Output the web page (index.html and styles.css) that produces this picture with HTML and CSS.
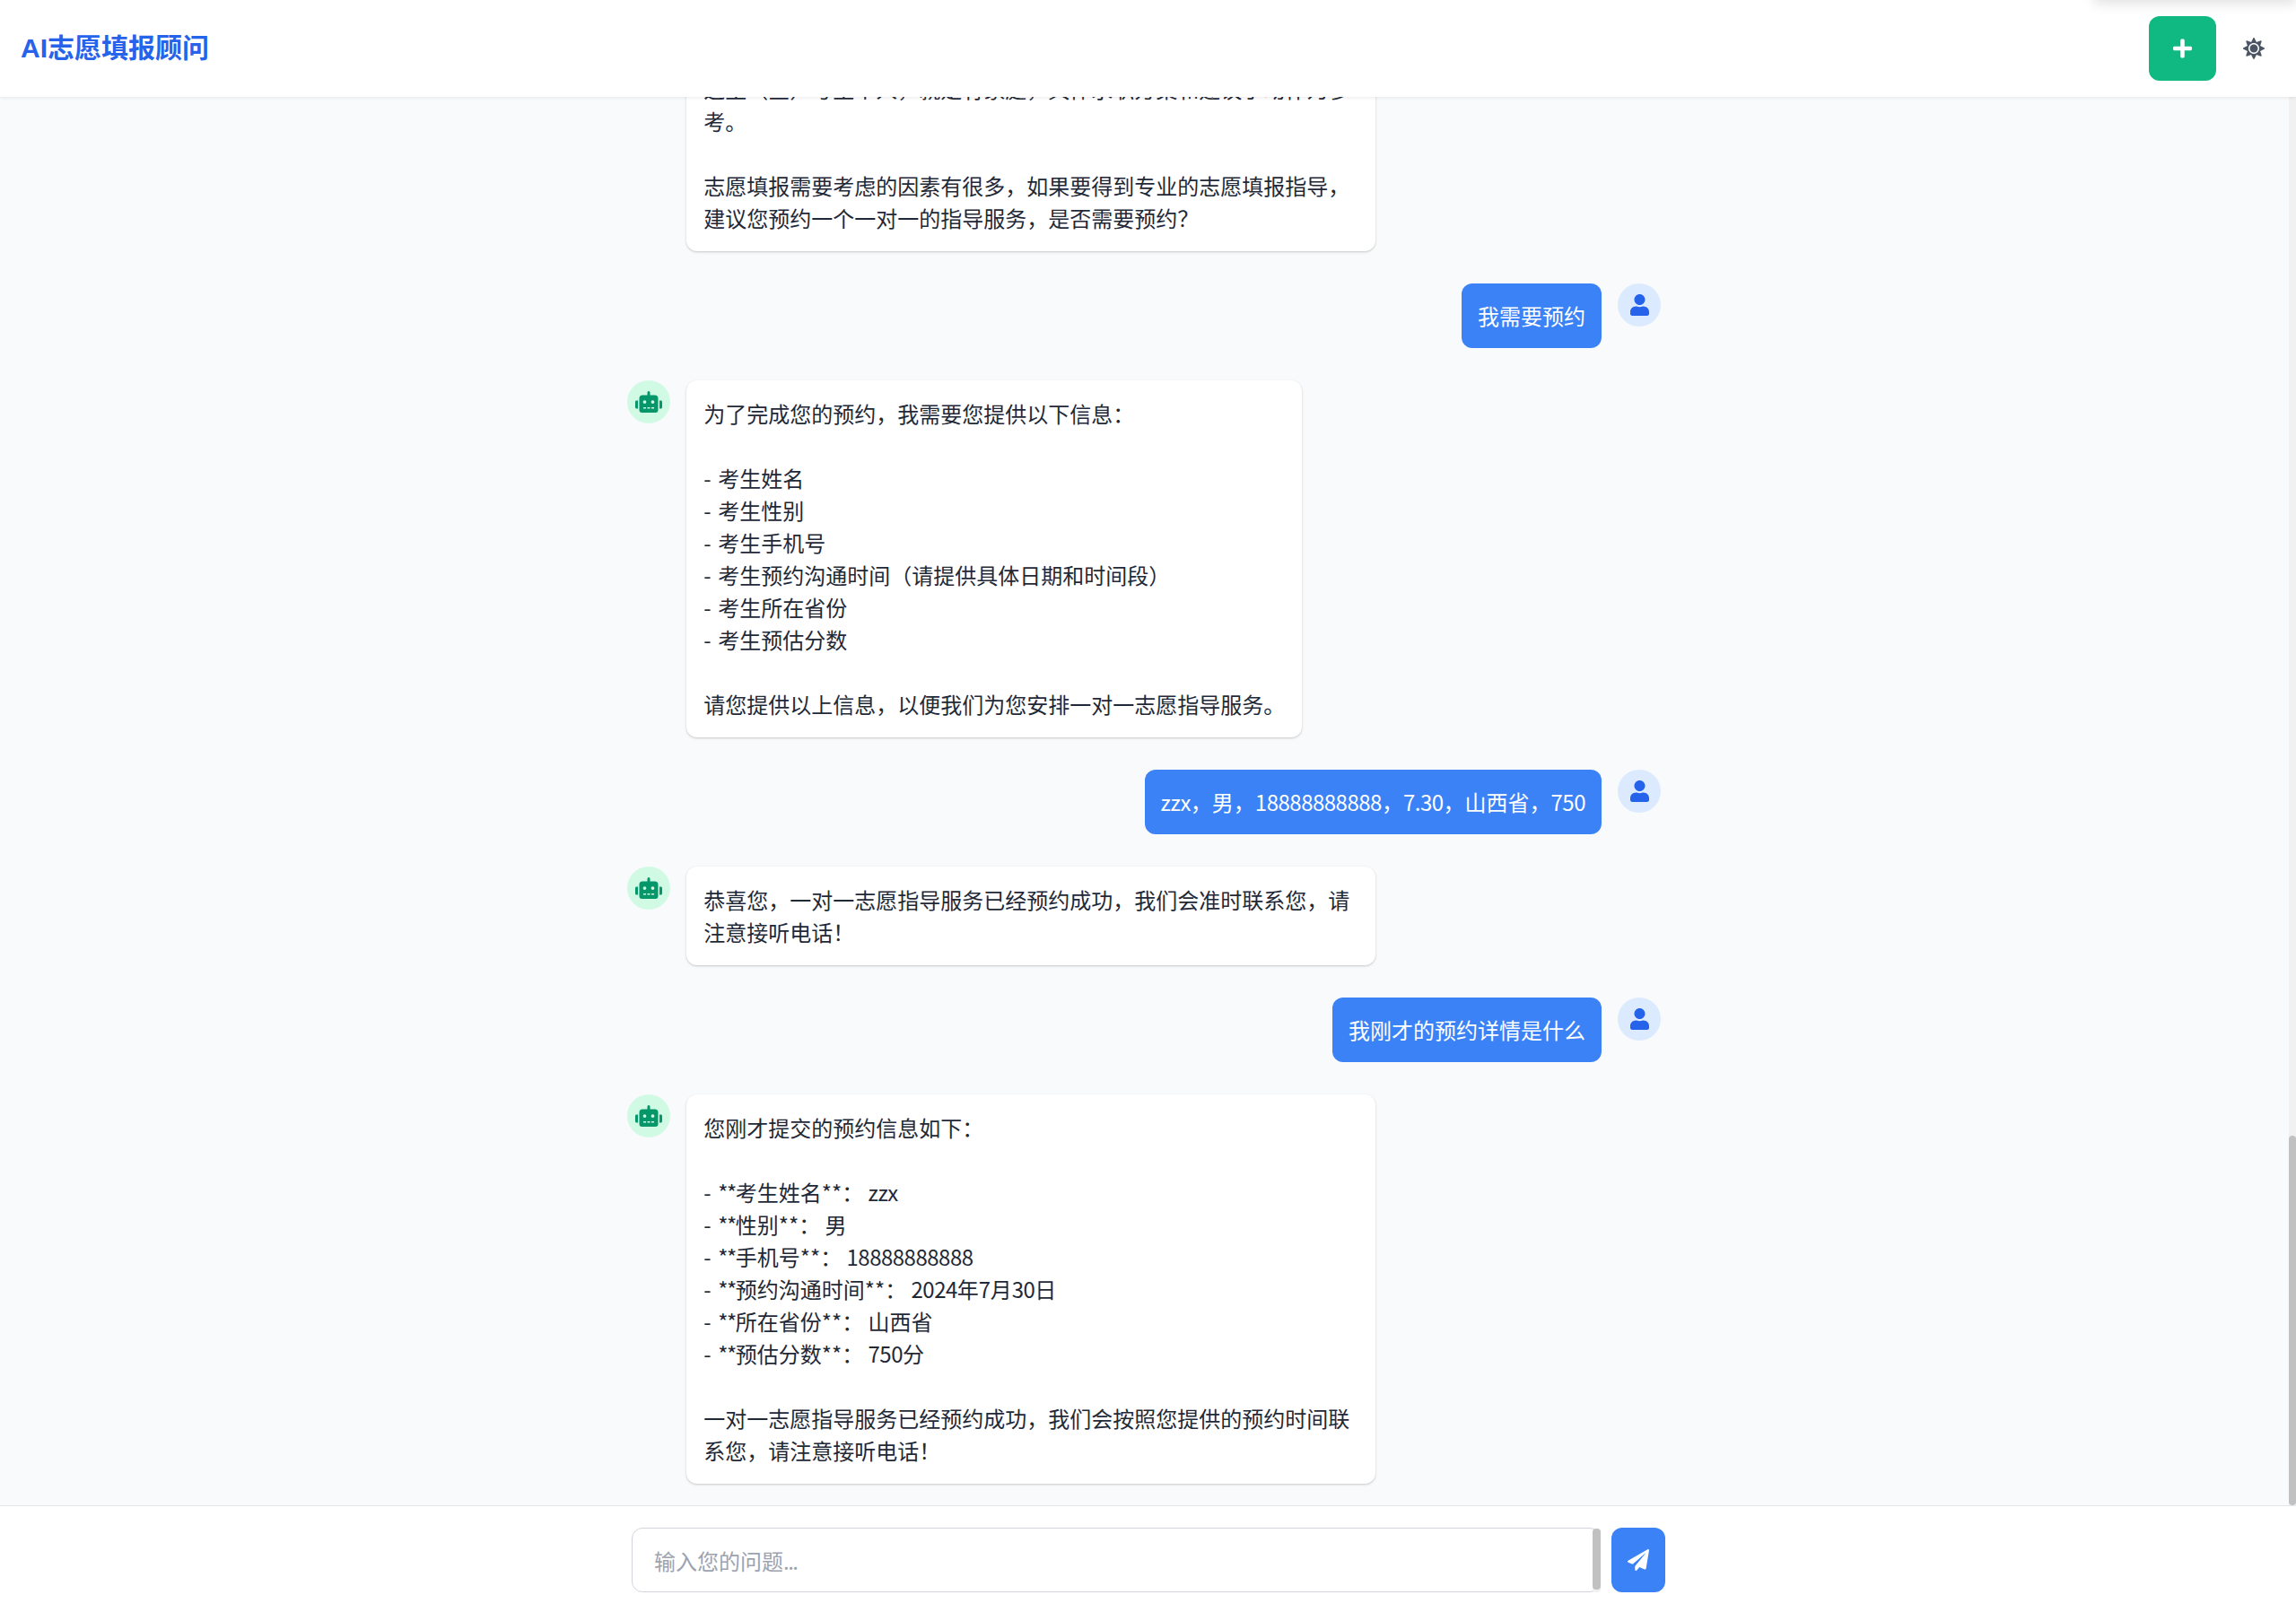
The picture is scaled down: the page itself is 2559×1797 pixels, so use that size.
FILE: index.html
```html
<!DOCTYPE html>
<html lang="zh-CN">
<head>
<meta charset="utf-8">
<title>AI志愿填报顾问</title>
<link rel="stylesheet" href="styles.css">
</head>
<body>
<svg class="sprite" aria-hidden="true">
  <symbol id="i-robot" viewBox="0 0 640 512"><path d="M32,224H64V416H32A31.960,31.960,0,0,1,0,384V256A31.960,31.960,0,0,1,32,224Zm512-48V448a64.063,64.063,0,0,1-64,64H160a64.063,64.063,0,0,1-64-64V176a79.974,79.974,0,0,1,80-80H288V32a32,32,0,0,1,64,0V96H464A79.974,79.974,0,0,1,544,176ZM264,256a40,40,0,1,0-40,40A39.997,39.997,0,0,0,264,256Zm-8,128H192v32h64Zm96,0H288v32h64ZM456,256a40,40,0,1,0-40,40A39.997,39.997,0,0,0,456,256Zm-8,128H384v32h64ZM640,256V384a31.960,31.960,0,0,1-32,32H576V224h32A31.960,31.960,0,0,1,640,256Z"/></symbol>
  <symbol id="i-user" viewBox="0 0 448 512"><path d="M224 256c70.700 0 128-57.300 128-128S294.700 0 224 0 96 57.300 96 128s57.300 128 128 128zm89.600 32h-16.700c-22.200 10.200-46.900 16-72.900 16s-50.600-5.800-72.900-16h-16.700C60.200 288 0 348.200 0 422.400V464c0 26.500 21.500 48 48 48h352c26.500 0 48-21.500 48-48v-41.600c0-74.200-60.200-134.400-134.400-134.400z"/></symbol>
</svg>
<div class="toast-shadow"></div>
<header class="topbar">
  <h1 class="brand">AI志愿填报顾问</h1>
  <div class="actions">
    <button class="new-btn" aria-label="新建">
      <svg viewBox="0 0 448 512" class="plus"><path d="M416 208H272V64c0-17.670-14.330-32-32-32h-32c-17.670 0-32 14.330-32 32v144H32c-17.670 0-32 14.330-32 32v32c0 17.670 14.330 32 32 32h144v144c0 17.670 14.330 32 32 32h32c17.670 0 32-14.330 32-32V304h144c17.670 0 32-14.330 32-32v-32c0-17.670-14.330-32-32-32z"/></svg>
    </button>
    <button class="gear-btn" aria-label="切换主题">
      <svg viewBox="0 0 512 512" class="gear"><path d="M256 160c-52.900 0-96 43.100-96 96s43.100 96 96 96 96-43.100 96-96-43.100-96-96-96zm246.400 80.500l-94.700-47.300 33.500-100.400c4.500-13.600-8.400-26.500-21.900-21.900l-100.400 33.500-47.400-94.800c-6.400-12.800-24.600-12.800-31 0l-47.300 94.700L92.700 70.800c-13.600-4.500-26.500 8.400-21.900 21.900l33.500 100.400-94.700 47.400c-12.800 6.400-12.800 24.600 0 31l94.700 47.300-33.500 100.500c-4.500 13.600 8.400 26.500 21.900 21.900l100.400-33.500 47.300 94.700c6.400 12.800 24.600 12.800 31 0l47.300-94.700 100.400 33.500c13.600 4.500 26.500-8.400 21.900-21.900l-33.500-100.400 94.700-47.300c13-6.500 13-24.700.2-31.100zm-155.900 106c-49.900 49.900-131.100 49.900-181 0-49.900-49.900-49.900-131.100 0-181 49.900-49.900 131.100-49.900 181 0 49.900 49.900 49.900 131.100 0 181z"/></svg>
    </button>
  </div>
</header>
<main class="chat">
  <div class="thread">
    <div class="row bot">
      <div class="avatar-slot"></div>
      <div class="bubble wide">
        <p class="ln">这里（查）考生个人，就是有家庭，具体求职方案和建议手动作为参考。</p>
        <p class="ln gap">志愿填报需要考虑的因素有很多，如果要得到专业的志愿填报指导，建议您预约一个一对一的指导服务，是否需要预约？</p>
      </div>
    </div>
    <div class="row user">
      <div class="bubble">我需要预约</div>
      <div class="avatar user-av"><svg><use href="#i-user"/></svg></div>
    </div>
    <div class="row bot">
      <div class="avatar bot-av"><svg><use href="#i-robot"/></svg></div>
      <div class="bubble">
        <p class="ln">为了完成您的预约，我需要您提供以下信息：</p>
        <p class="ln gap"><span class="dash">- </span>考生姓名</p>
        <p class="ln"><span class="dash">- </span>考生性别</p>
        <p class="ln"><span class="dash">- </span>考生手机号</p>
        <p class="ln"><span class="dash">- </span>考生预约沟通时间（请提供具体日期和时间段）</p>
        <p class="ln"><span class="dash">- </span>考生所在省份</p>
        <p class="ln"><span class="dash">- </span>考生预估分数</p>
        <p class="ln gap">请您提供以上信息，以便我们为您安排一对一志愿指导服务。</p>
      </div>
    </div>
    <div class="row user">
      <div class="bubble"><span class="num">zzx</span>，男，<span class="num">18888888888</span>，<span class="num">7.30</span>，山西省，<span class="num">750</span></div>
      <div class="avatar user-av"><svg><use href="#i-user"/></svg></div>
    </div>
    <div class="row bot">
      <div class="avatar bot-av"><svg><use href="#i-robot"/></svg></div>
      <div class="bubble wide">恭喜您，一对一志愿指导服务已经预约成功，我们会准时联系您，请注意接听电话！</div>
    </div>
    <div class="row user">
      <div class="bubble">我刚才的预约详情是什么</div>
      <div class="avatar user-av"><svg><use href="#i-user"/></svg></div>
    </div>
    <div class="row bot">
      <div class="avatar bot-av"><svg><use href="#i-robot"/></svg></div>
      <div class="bubble wide">
        <p class="ln">您刚才提交的预约信息如下：</p>
        <p class="ln gap"><span class="dash">- </span><span class="stars">**</span>考生姓名**： <span class="num">zzx</span></p>
        <p class="ln"><span class="dash">- </span><span class="stars">**</span>性别**： 男</p>
        <p class="ln"><span class="dash">- </span><span class="stars">**</span>手机号**： <span class="num">18888888888</span></p>
        <p class="ln"><span class="dash">- </span><span class="stars">**</span>预约沟通时间**： <span class="num">2024</span>年<span class="num">7</span>月<span class="num">30</span>日</p>
        <p class="ln"><span class="dash">- </span><span class="stars">**</span>所在省份**： 山西省</p>
        <p class="ln"><span class="dash">- </span><span class="stars">**</span>预估分数**： <span class="num">750</span>分</p>
        <p class="ln gap">一对一志愿指导服务已经预约成功，我们会按照您提供的预约时间联系您，请注意接听电话！</p>
      </div>
    </div>
  </div>
  <div class="scroll-thumb"></div>
</main>
<footer class="composer">
  <div class="composer-inner">
    <div class="input-wrap">
      <div class="input">输入您的问题<span class="dots">...</span></div>
      <div class="input-thumb"></div>
    </div>
    <button class="send" aria-label="发送">
      <svg viewBox="0 0 512 512"><path d="M476 3.200L12.500 270.600c-18.100 10.400-15.800 35.600 2.200 43.200L121 358.400l287.300-253.200c5.500-4.900 13.300 2.600 8.600 8.300L176 407v80.500c0 23.600 28.500 32.900 42.500 15.800L282 426l124.600 52.200c14.200 6 30.400-2.900 33-18.200l72-432C515 7.800 493.300-6.800 476 3.200z"/></svg>
    </button>
  </div>
</footer>
</body>
</html>
```

FILE: styles.css
```css
* { box-sizing: border-box; }
html, body { height: 100%; }
body {
  margin: 0;
  display: flex;
  flex-direction: column;
  height: 1797px;
  overflow: hidden;
  background: #f9fafb;
  font-family: "Noto Sans CJK SC", "Noto Sans", sans-serif;
  font-size: 24px;
  line-height: 36px;
  color: #1f2937;
  position: relative;
}
.sprite { display: none; }
.toast-shadow {
  position: absolute;
  top: -20px;
  right: 0;
  width: 225px;
  height: 20px;
  box-shadow: 0 4px 14px rgba(0,0,0,.12);
  z-index: 3;
}
.topbar {
  flex: none;
  height: 108px;
  background: #fff;
  display: flex;
  align-items: center;
  justify-content: space-between;
  padding: 0 35px 0 23px;
  box-shadow: 0 2px 3px rgba(0,0,0,.06);
  position: relative;
  z-index: 2;
}
.brand {
  margin: 0;
  font-size: 30px;
  font-weight: 700;
  line-height: 40px;
  color: #2563eb;
  font-family: "Liberation Sans", "Noto Sans CJK SC", sans-serif;
}
.actions { display: flex; align-items: center; gap: 30px; }
.new-btn {
  width: 75px;
  height: 72px;
  border: 0;
  border-radius: 12px;
  background: #10b981;
  display: flex;
  align-items: center;
  justify-content: center;
  padding: 0;
}
.plus { width: 21px; height: 24px; fill: #fff; }
.gear-btn {
  border: 0;
  padding: 0;
  background: none;
  width: 24px;
  height: 24px;
  display: flex;
}
.gear { width: 24px; height: 24px; fill: #4b5563; }
.chat {
  flex: 1;
  min-height: 0;
  overflow: hidden;
  display: flex;
  flex-direction: column;
  justify-content: flex-end;
  position: relative;
  padding-bottom: 24px;
}
.thread {
  width: 1152px;
  margin-left: 699px;
  display: flex;
  flex-direction: column;
  gap: 36px;
  flex: none;
}
.row { display: flex; gap: 18px; align-items: flex-start; }
.row.user { justify-content: flex-end; }
.row.bot { justify-content: flex-start; }
.avatar-slot { width: 48px; flex: none; }
.avatar {
  flex: none;
  width: 48px;
  height: 48px;
  border-radius: 50%;
  display: flex;
  align-items: center;
  justify-content: center;
}
.user-av { background: #dbeafe; }
.user-av svg { width: 21px; height: 24px; fill: #2563eb; }
.bot-av { background: #d1fae5; }
.bot-av svg { width: 30px; height: 24px; fill: #059669; }
.bubble {
  padding: 18px;
  border-radius: 12px;
  max-width: 768px;
}
.bubble.wide { width: 768px; }
.bot .bubble {
  padding: 19px 19.2px;
  background: #fff;
  box-shadow: 0 1px 3px rgba(0,0,0,.16), 0 1px 2px rgba(0,0,0,.06);
}
.user .bubble { background: #3b82f6; color: #fff; }
.ln { margin: 0; }
.ln.gap { margin-top: 36px; }
.dash { letter-spacing: 1.2px; }
.stars { letter-spacing: -1.5px; }
.num { letter-spacing: -.5px; }
.dots { letter-spacing: -1.5px; }
.scroll-thumb {
  position: absolute;
  right: 0;
  bottom: 0;
  width: 8px;
  height: 412px;
  background: #c1c1c1;
  border-radius: 4px;
}
.chat::after {
  content: "";
  position: absolute;
  top: 0;
  bottom: 0;
  right: 0;
  width: 8px;
  background: #f1f1f1;
  z-index: -1;
}
.composer {
  flex: none;
  height: 119px;
  background: #fff;
  border-top: 1px solid #e5e7eb;
  display: flex;
  padding-top: 24px;
}
.composer-inner {
  margin-left: 704px;
  width: 1152px;
  display: flex;
  gap: 12px;
  align-items: flex-start;
}
.input-wrap { width: 1080px; height: 72px; position: relative; }
.input {
  height: 72px;
  border: 1px solid #d1d5db;
  border-radius: 12px;
  padding: 18px 24px;
  color: #9ca3af;
  background: #fff;
}
.input-thumb {
  position: absolute;
  right: 0;
  top: 1px;
  bottom: 3px;
  width: 9px;
  background: #c1c1c1;
  border-radius: 4px;
  box-shadow: 0 3px 0 #f1f1f1;
}
.send {
  width: 60px;
  height: 72px;
  border: 0;
  padding: 0;
  border-radius: 12px;
  background: #3b82f6;
  display: flex;
  align-items: center;
  justify-content: center;
}
.send svg { width: 24px; height: 24px; fill: #fff; }
```
